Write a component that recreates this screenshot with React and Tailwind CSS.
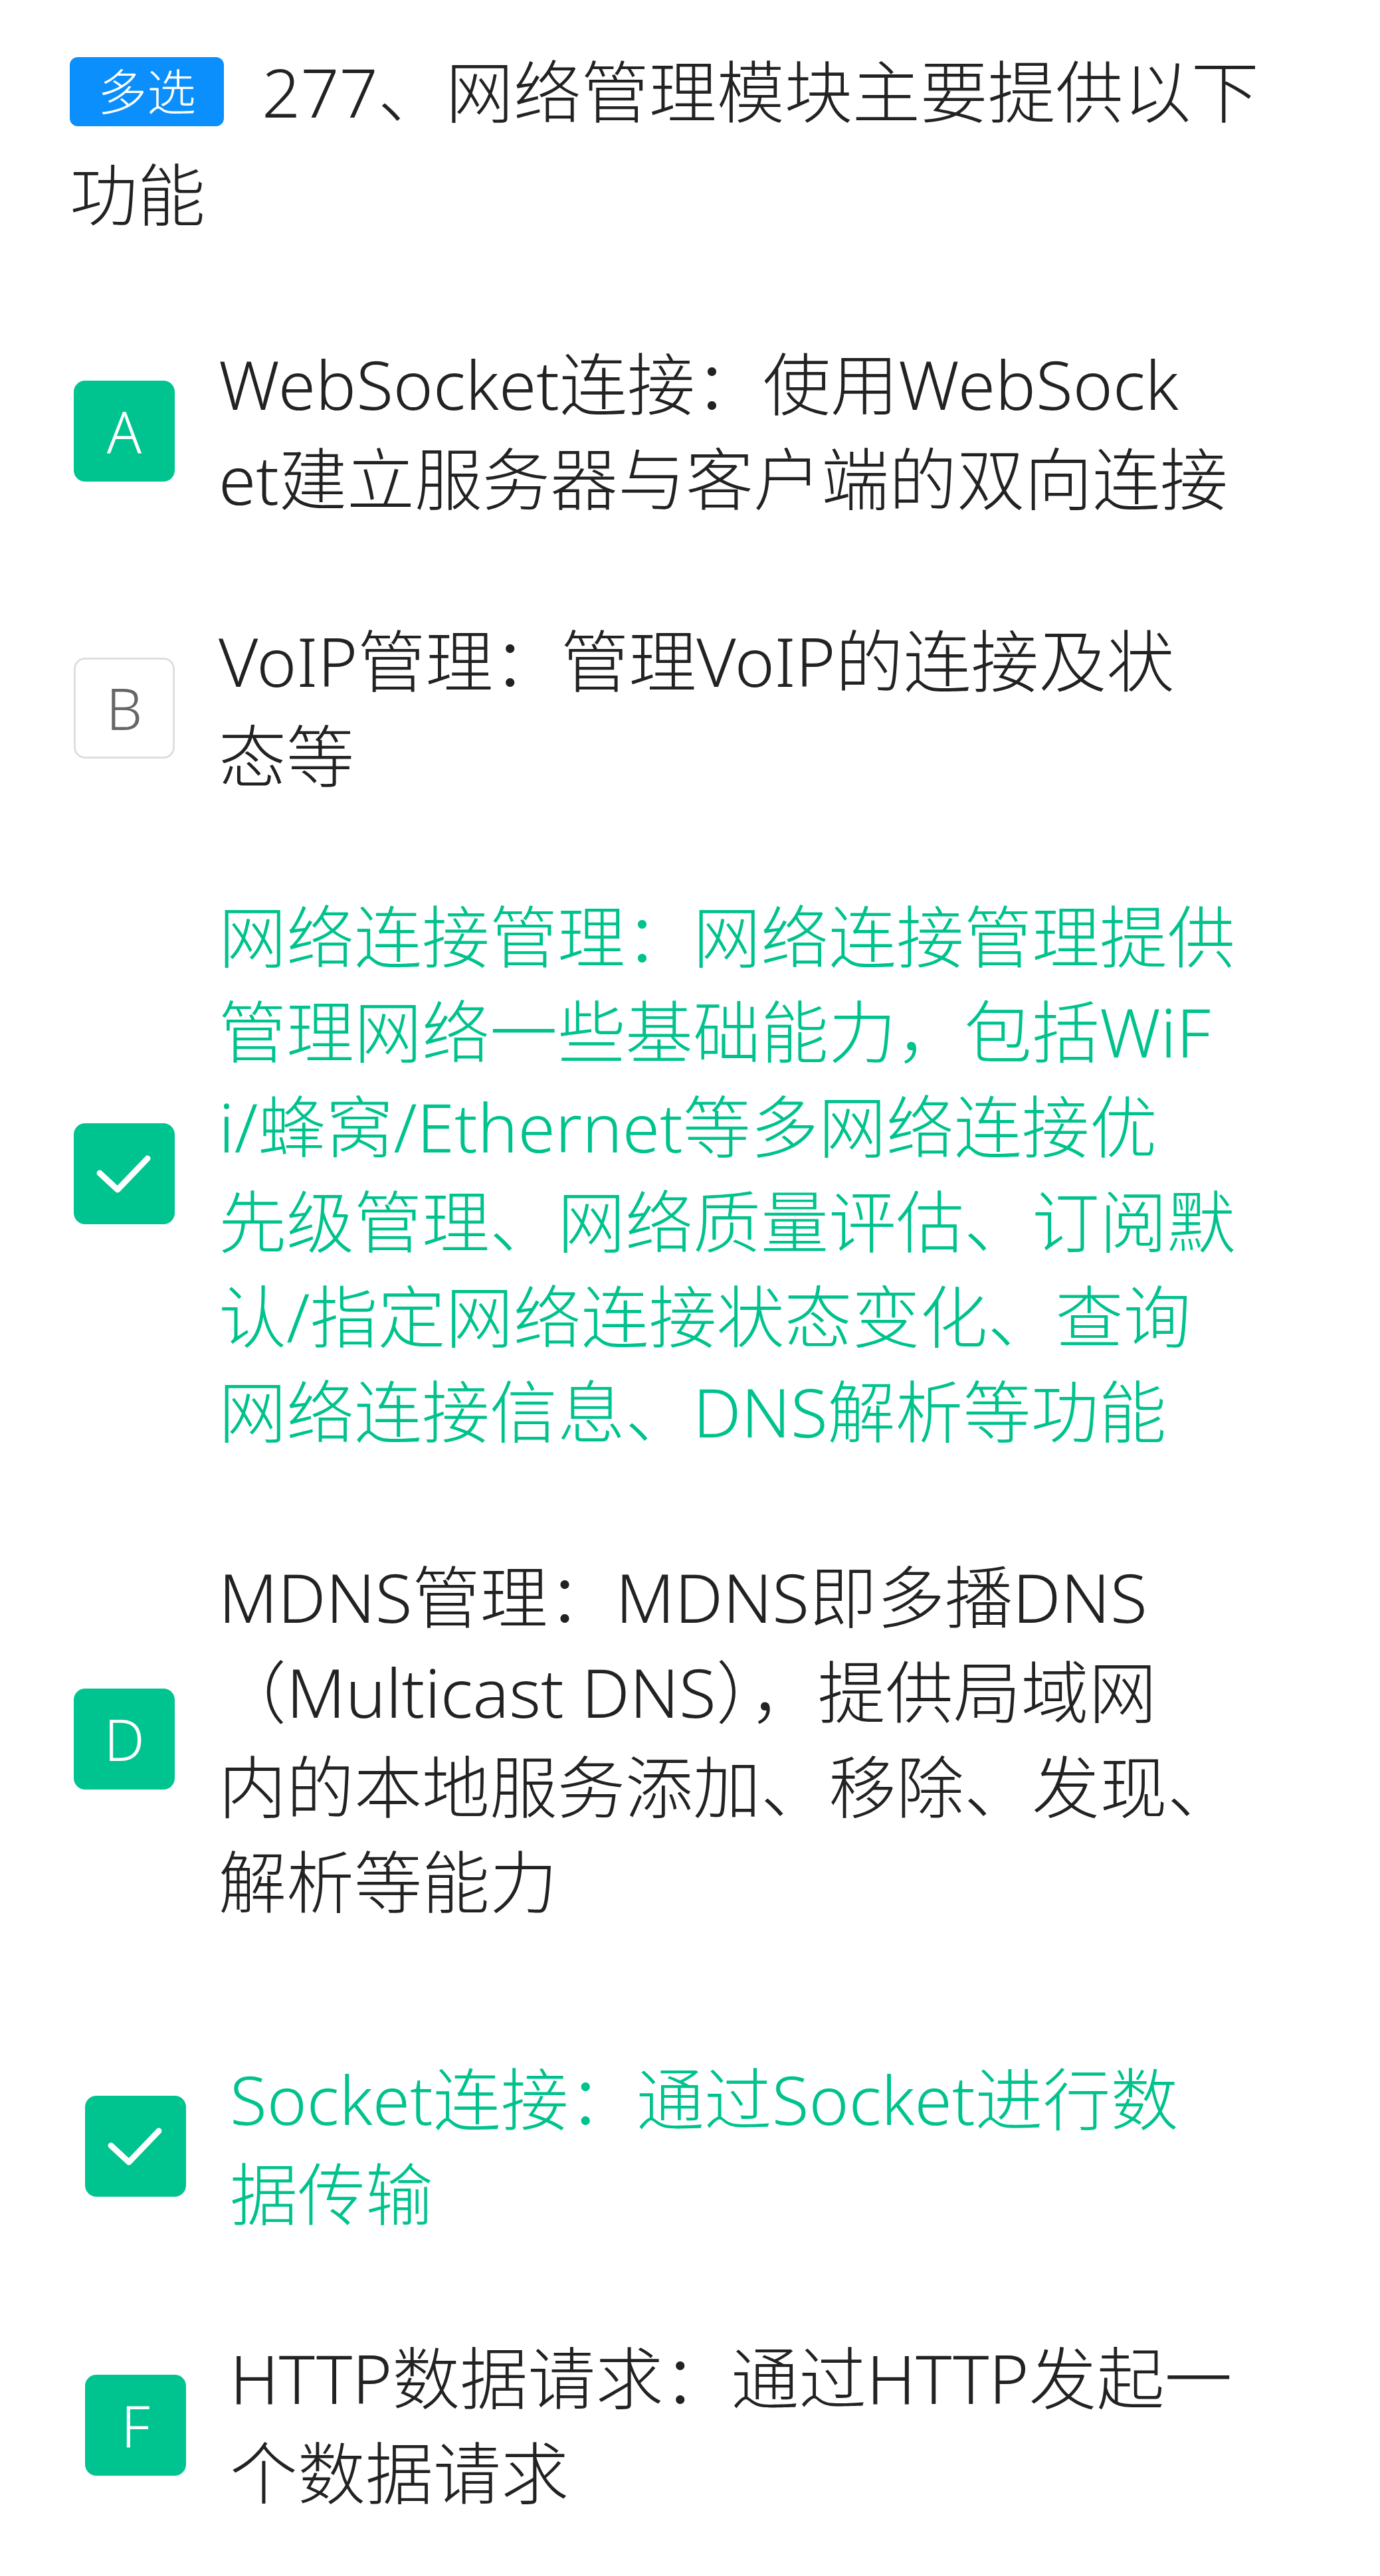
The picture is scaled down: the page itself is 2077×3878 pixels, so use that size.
import React from "react";

const FONT = {
  fontFamily: '"Noto Sans", "Noto Sans CJK SC", sans-serif',
};

const options = [
  {
    key: "A",
    state: "filled",
    rowClass: "mt-[136px]",
    lines: ["WebSocket连接：使用WebSock", "et建立服务器与客户端的双向连接"],
  },
  {
    key: "B",
    state: "empty",
    rowClass: "mt-[131px]",
    lines: ["VoIP管理：管理VoIP的连接及状", "态等"],
  },
  {
    key: "C",
    state: "checked",
    rowClass: "mt-[129px]",
    lines: [
      "网络连接管理：网络连接管理提供",
      "管理网络一些基础能力，包括WiF",
      "i/蜂窝/Ethernet等多网络连接优",
      "先级管理、网络质量评估、订阅默",
      "认/指定网络连接状态变化、查询",
      "网络连接信息、DNS解析等功能",
    ],
  },
  {
    key: "D",
    state: "filled",
    rowClass: "mt-[136px]",
    lines: [
      "MDNS管理：MDNS即多播DNS",
      "（Multicast DNS），提供局域网",
      "内的本地服务添加、移除、发现、",
      "解析等能力",
    ],
  },
  {
    key: "E",
    state: "checked",
    rowClass: "mt-[184px] pl-[17px]",
    lines: ["Socket连接：通过Socket进行数", "据传输"],
  },
  {
    key: "F",
    state: "filled",
    rowClass: "mt-[134px] pl-[17px]",
    lines: ["HTTP数据请求：通过HTTP发起一", "个数据请求"],
  },
];

function OptionMark({ letter, state }) {
  if (state === "checked") {
    return (
      <div className="w-[152px] h-[152px] shrink-0 rounded-[17px] bg-[#00c48f] flex items-center justify-center">
        <svg width="152" height="152" viewBox="0 0 152 152" fill="none">
          <path
            d="M39 75 L66 100 L111 53"
            stroke="#ffffff"
            strokeWidth="9"
            strokeLinecap="round"
            strokeLinejoin="round"
          />
        </svg>
      </div>
    );
  }
  if (state === "empty") {
    return (
      <div className="w-[152px] h-[152px] shrink-0 rounded-[17px] border-[3px] border-[#dedede] bg-white flex items-center justify-center text-[86px] leading-none text-[#666666] font-light">
        {letter}
      </div>
    );
  }
  return (
    <div className="w-[152px] h-[152px] shrink-0 rounded-[17px] bg-[#00c48f] flex items-center justify-center text-[86px] leading-none text-white font-light">
      {letter}
    </div>
  );
}

function OptionRow({ option }) {
  const textColor =
    option.state === "checked" ? "text-[#00c28d]" : "text-[#222222]";
  return (
    <div className={`flex items-center ${option.rowClass}`}>
      <div className="ml-[6px]">
        <OptionMark letter={option.key} state={option.state} />
      </div>
      <div className={`ml-[66px] text-[102px] leading-[143px] font-light ${textColor}`}>
        {option.lines.map((line, i) => (
          <div key={i} className="whitespace-nowrap">
            {line}
          </div>
        ))}
      </div>
    </div>
  );
}

export default function App() {
  return (
    <div className="min-h-screen bg-white pl-[105px] pr-[104px] pt-[60px] pb-[86px]" style={FONT}>
      {/* 题目 */}
      <div className="text-[102px] leading-[155px] text-[#222222] font-light">
        <div className="flex items-center">
          <span className="w-[232px] h-[104px] shrink-0 rounded-[12px] bg-[#0a8ffc] text-white text-[74px] leading-none flex items-center justify-center">
            多选
          </span>
          <span className="ml-[57px] whitespace-nowrap">277、网络管理模块主要提供以下</span>
        </div>
        <div>功能</div>
      </div>

      {/* 选项 */}
      <div className="flex flex-col">
        {options.map((option) => (
          <OptionRow key={option.key} option={option} />
        ))}
      </div>
    </div>
  );
}
